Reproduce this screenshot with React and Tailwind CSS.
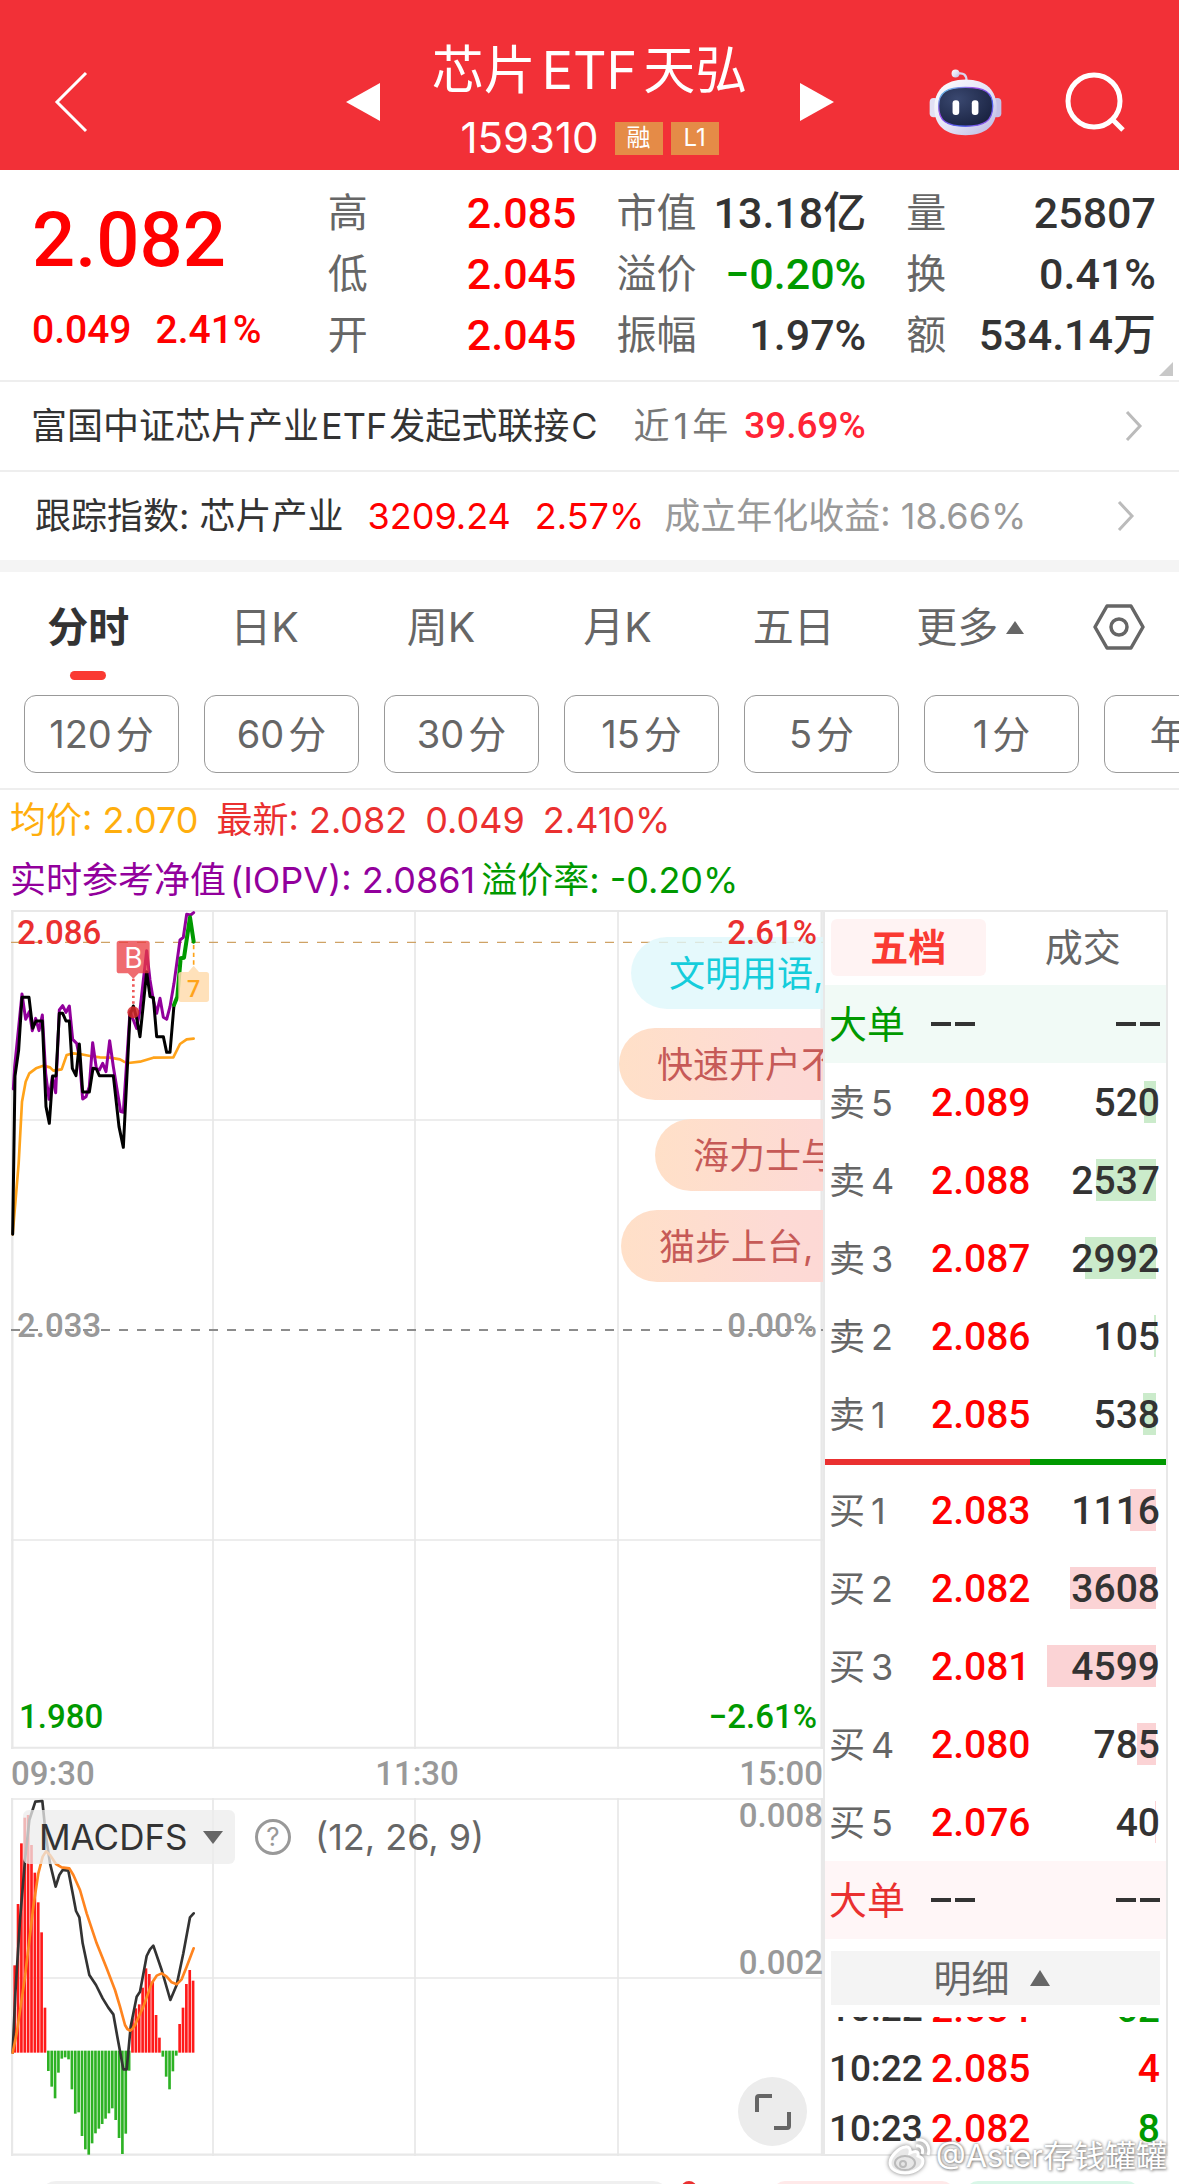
import { useState } from 'react'

const NUM = "font-['Roboto','Noto_Sans_CJK_SC',sans-serif] font-medium"

const STATS = [
  [
    { label: '高', value: '2.085', color: 'text-[#ff0000]' },
    { label: '低', value: '2.045', color: 'text-[#ff0000]' },
    { label: '开', value: '2.045', color: 'text-[#ff0000]' },
  ],
  [
    { label: '市值', value: '13.18亿', color: 'text-[#333]' },
    { label: '溢价', value: '−0.20%', color: 'text-[#009900]' },
    { label: '振幅', value: '1.97%', color: 'text-[#333]' },
  ],
  [
    { label: '量', value: '25807', color: 'text-[#333]' },
    { label: '换', value: '0.41%', color: 'text-[#333]' },
    { label: '额', value: '534.14万', color: 'text-[#333]' },
  ],
]

const TABS = ['分时', '日K', '周K', '月K', '五日', '更多']
const PERIODS = ['120分', '60分', '30分', '15分', '5分', '1分', '年K']

const SELLS = [
  ['卖5', '2.089', 520],
  ['卖4', '2.088', 2537],
  ['卖3', '2.087', 2992],
  ['卖2', '2.086', 105],
  ['卖1', '2.085', 538],
]
const BUYS = [
  ['买1', '2.083', 1116],
  ['买2', '2.082', 3608],
  ['买3', '2.081', 4599],
  ['买4', '2.080', 785],
  ['买5', '2.076', 40],
]
const MAX_VOL = 4599
const BAR_MAX = 109

const TICKS = [
  { time: '10:22', price: '2.084', vol: 62, color: 'text-[#009900]' },
  { time: '10:22', price: '2.085', vol: 4, color: 'text-[#ff0000]' },
  { time: '10:23', price: '2.082', vol: 8, color: 'text-[#009900]' },
]

/* ── Chart data (svg units, 3 per px) ── */
const IOPV = '40,567 44,500 66,282 77,358 88,335 97,392 107,355 117,392 127,345 137,520 147,598 157,530 167,578 178,330 188,317 198,337 208,318 218,418 230,430 238,470 248,597 258,590 268,560 278,428 289,505 298,510 308,490 318,515 329,422 340,500 362,635 370,637 390,335 400,360 410,385 420,330 440,152 450,240 460,300 470,340 480,295 490,352 500,358 510,320 522,250 540,120 550,112 560,43 572,45 581,38'
const PRICE = '38,1003 45,528 56,450 66,292 87,292 98,385 108,363 127,363 138,620 148,670 158,528 168,528 178,340 188,340 198,363 208,363 217,505 228,527 238,432 248,576 268,576 279,505 289,507 298,527 340,527 357,680 370,742 390,345 400,318 410,355 420,410 440,215 450,290 460,293 470,410 490,410 500,457 510,457 522,315'
const PRICE_TAIL = '522,315 532,290 542,175 552,173 570,52 581,125'
const AVG = '38,1003 56,790 66,605 77,545 88,520 108,505 130,497 150,502 160,512 185,508 200,465 220,460 240,462 270,468 300,472 330,473 360,478 372,485 385,489 420,485 440,479 460,473 520,472 540,432 560,418 581,416'
const DIF = '38,818 46,640 60,420 75,240 88,120 106,65 127,63 138,170 150,250 167,320 178,285 188,270 205,272 218,340 228,393 238,412 248,490 268,585 288,615 308,655 325,683 340,703 352,770 370,868 380,868 392,740 410,650 420,635 440,528 450,508 460,497 485,570 511,660 530,615 550,520 570,412 581,400'
const DEA = '38,818 50,760 75,590 100,380 115,280 128,230 138,214 150,225 168,252 185,262 208,265 220,285 240,330 260,400 290,490 320,565 345,630 360,680 375,735 382,747 390,752 397,747 405,735 430,680 455,610 470,587 485,580 500,590 515,607 530,613 545,598 560,560 581,505'
const MACD = [
  556, 372, 190, 113, 105, 195, 278, 367, 457, 683,
  873, 920, 955, 878, 836, 832, 838, 928, 1001, 997, 1068, 1108, 1124, 1090, 1060, 1046, 1032, 1016, 1000, 985, 1020, 1074, 1122, 1061, 872,
  715, 685, 673, 623, 565, 582, 605, 705, 773,
  830, 890, 928, 874, 827,
  732, 683, 612, 570, 602,
]

function Robot() {
  return (
    <svg viewBox="88 50 220 204" className="h-[68px] w-[73px]" aria-hidden="true">
      <defs>
        <linearGradient id="shell" x1="0" y1="0" x2="1" y2="1">
          <stop offset="0" stopColor="#ffffff" />
          <stop offset="0.55" stopColor="#e3e2f5" />
          <stop offset="1" stopColor="#b9b6e2" />
        </linearGradient>
        <linearGradient id="rim" x1="0" y1="0" x2="1" y2="1">
          <stop offset="0" stopColor="#4fe3e8" />
          <stop offset="0.35" stopColor="#a24be8" />
          <stop offset="0.7" stopColor="#4a62ee" />
          <stop offset="1" stopColor="#b04be8" />
        </linearGradient>
        <radialGradient id="visor" cx="0.35" cy="0.3" r="0.8">
          <stop offset="0" stopColor="#3a4870" />
          <stop offset="1" stopColor="#18213f" />
        </radialGradient>
      </defs>
      <path d="M176 66 Q201 62 201 88" fill="none" stroke="#d9d6ef" strokeWidth="7" />
      <circle cx="168" cy="66" r="12" fill="url(#shell)" />
      <rect x="90" y="140" width="26" height="58" rx="12" fill="#e2e0f4" />
      <rect x="280" y="140" width="26" height="58" rx="12" fill="#c4c1e8" />
      <path d="M198 84 C262 84 292 118 292 170 C292 224 258 252 198 252 C138 252 104 224 104 170 C104 118 134 84 198 84Z" fill="url(#shell)" />
      <path d="M198 108 C256 108 280 122 280 164 C280 210 254 225 198 225 C142 225 117 210 117 164 C117 122 142 108 198 108Z" fill="url(#visor)" stroke="url(#rim)" strokeWidth="4" />
      <rect x="159" y="147" width="20" height="44" rx="9" fill="#fff" />
      <rect x="217" y="147" width="20" height="44" rx="9" fill="#fff" />
    </svg>
  )
}

function Header() {
  return (
    <header className="grid shrink-0 grid-cols-[1fr_auto_1fr] items-center bg-[#f23037] pt-[39px] pb-[5px] text-white">
      <button aria-label="返回" className="ml-[53px] justify-self-start">
        <svg viewBox="0 0 36 62" className="h-[62px] w-9" fill="none" stroke="currentColor" strokeWidth="3">
          <path d="M33 2 L4 31 L33 60" />
        </svg>
      </button>
      <div className="flex items-center gap-5">
        <button aria-label="上一只">
          <svg viewBox="0 0 34 38" className="h-[38px] w-[34px]" fill="currentColor"><path d="M34 0 V38 L0 19Z" /></svg>
        </button>
        <div className="flex h-[126px] w-[380px] flex-col items-center">
          <h1 className="text-[52px] leading-[64px] whitespace-nowrap">芯片<span className="mx-1.5">ETF</span>天弘</h1>
          <div className="mt-[17px] flex h-9 items-center gap-2">
            <span className="mr-2 text-[42px] leading-9">159310</span>
            <span className="flex h-[33px] w-12 items-center justify-center bg-[#e58b47] text-2xl">融</span>
            <span className="flex h-[33px] w-12 items-center justify-center bg-[#e58b47] text-2xl">L1</span>
          </div>
        </div>
        <button aria-label="下一只">
          <svg viewBox="0 0 34 38" className="h-[38px] w-[34px]" fill="currentColor"><path d="M0 0 V38 L34 19Z" /></svg>
        </button>
      </div>
      <div className="mr-[53px] flex items-center gap-[60px] justify-self-end">
        <button aria-label="智能助手"><Robot /></button>
        <button aria-label="搜索">
          <svg viewBox="0 0 64 64" className="size-16" fill="none" stroke="currentColor" strokeWidth="5">
            <circle cx="32" cy="31" r="26" />
            <path d="M51 50 L61 60" />
          </svg>
        </button>
      </div>
    </header>
  )
}

function Quote() {
  return (
    <section className="relative grid shrink-0 grid-cols-[255fr_248fr_249fr_249fr] gap-x-10 border-b-2 border-[#eee] pt-3 pr-[23px] pb-[15px] pl-8">
      <div className={`text-[#ff0000] ${NUM}`}>
        <div className="mt-2 text-[76px] leading-[100px]">2.082</div>
        <div className="mt-5 flex gap-6 text-[39px] leading-10">
          <span>0.049</span>
          <span>2.41%</span>
        </div>
      </div>
      {STATS.map((col, i) => (
        <dl key={i}>
          {col.map(s => (
            <div key={s.label} className="flex h-[61px] items-center justify-between whitespace-nowrap">
              <dt className="text-[40px] leading-[60px] text-[#666]">{s.label}</dt>
              <dd className={`text-[43px] leading-[60px] ${NUM} ${s.color}`}>{s.value}</dd>
            </div>
          ))}
        </dl>
      ))}
      <svg viewBox="0 0 14 14" className="absolute right-1.5 bottom-1 size-3.5"><path d="M14 0 V14 H0Z" fill="#c8c8c8" /></svg>
    </section>
  )
}

function Chevron() {
  return (
    <svg viewBox="0 0 18 32" className="ml-auto h-8 w-[18px]" fill="none" stroke="#bbb" strokeWidth="3">
      <path d="M2 2 L15 16 L2 30" />
    </svg>
  )
}

function Links() {
  return (
    <>
      <a href="#fund" className="flex h-[90px] shrink-0 items-center border-b-2 border-[#eee] pr-9 pl-[31px] text-4xl whitespace-nowrap">
        <span className="text-[#333]">富国中证芯片产业<span className="mx-0.5">ETF</span>发起式联接<span className="ml-0.5">C</span></span>
        <span className="ml-9 text-[#777]">近<span className="mx-1">1</span>年</span>
        <span className={`ml-4 text-[37px] text-[#ff2436] ${NUM}`}>39.69%</span>
        <Chevron />
      </a>
      <a href="#index" className="flex h-[100px] shrink-0 items-center border-b-12 border-[#f4f4f4] pr-11 pl-[35px] text-4xl whitespace-nowrap">
        <span className="text-[#333]">跟踪指数: 芯片产业</span>
        <span className="ml-6 text-[#ff0000]">3209.24</span>
        <span className="ml-6 text-[#ff0000]">2.57%</span>
        <span className="ml-5 text-[#999]">成立年化收益: 18.66%</span>
        <Chevron />
      </a>
    </>
  )
}

function Tabs({ tab, setTab }) {
  return (
    <nav className="shrink-0 border-b-2 border-[#eee]">
      <div className="flex h-[108px]">
        {TABS.map(t => (
          <button
            key={t}
            onClick={() => setTab(t)}
            className={`flex flex-[177] flex-col items-center pt-[25px] text-[41px] leading-[60px] ${t === tab ? 'font-bold text-[#333]' : 'text-[#666]'}`}
          >
            <span className="flex items-center gap-2">
              {t}
              {t === '更多' && <svg viewBox="0 0 18 13" className="h-[13px] w-[18px]" fill="#666"><path d="M9 0 L18 13 H0Z" /></svg>}
            </span>
            {t === tab && <span className="mt-3.5 h-[9px] w-9 rounded-full bg-[#fa3a32]" />}
          </button>
        ))}
        <button aria-label="设置" className="flex flex-[121] justify-center pt-8">
          <svg viewBox="0 0 52 46" className="h-[46px] w-[52px]" fill="none" stroke="#666" strokeWidth="3.5" strokeLinejoin="round">
            <path d="M14 2 H38 L50 23 L38 44 H14 L2 23Z" />
            <circle cx="26" cy="23" r="8" />
          </svg>
        </button>
      </div>
      <div className="flex gap-[25px] overflow-hidden pt-[15px] pb-[15px] pl-6">
        {PERIODS.map(p => (
          <button key={p} className="h-[78px] w-[155px] shrink-0 rounded-xl border border-[#999] text-[38px] text-[#666]">
            {p.replace('分', '')}{p.includes('分') && <span className="ml-1">分</span>}
          </button>
        ))}
      </div>
    </nav>
  )
}

function PriceChart() {
  return (
    <div className="relative overflow-hidden">
      <svg viewBox="33 30 2436 2517" className="block w-full" fill="none">
        <g stroke="#e8e8e8" strokeWidth="6">
          <path d="M33 33 H2469 M33 2543 H2469" />
          <path d="M37 30 V2547 M2465 30 V2547" strokeWidth="7" />
          <path d="M639 30 V2547 M1245 30 V2547 M1854 30 V2547 M33 660 H2469 M33 1920 H2469" strokeWidth="5" />
        </g>
        <path d="M33 127 H2469" stroke="#cfa265" strokeWidth="4" strokeDasharray="27 27" />
        <path d="M33 1290 H2469" stroke="#8c8c8c" strokeWidth="6" strokeDasharray="27 27" />
      </svg>

      {/* live comment bubbles */}
      <div className="absolute inset-y-0 right-0 w-[204px] overflow-hidden text-4xl whitespace-nowrap">
        <div className="mt-[27px] ml-3 h-[72px] w-80 rounded-full bg-[#dff8fb]/80 pl-[38px] leading-[74px] text-[#15cddb]">文明用语,</div>
        <div className="mt-[19px] h-[72px] w-80 rounded-full bg-linear-to-r from-[#ffe0c8] via-[#fddad5] to-[#fdd5d5] pl-[38px] leading-[74px] text-[#c65a57]">快速开户不</div>
        <div className="mt-[19px] ml-9 h-[72px] w-80 rounded-full bg-linear-to-r from-[#ffe0c8] via-[#fddad5] to-[#fdd5d5] pl-[38px] leading-[74px] text-[#c65a57]">海力士与</div>
        <div className="mt-[19px] ml-0.5 h-[72px] w-80 rounded-full bg-linear-to-r from-[#ffe0c8] via-[#fddad5] to-[#fdd5d5] pl-[38px] leading-[74px] text-[#c65a57]">猫步上台,</div>
      </div>

      <div className={`absolute inset-0 text-[33px] leading-10 ${NUM}`}>
        <span className="absolute top-[3px] left-1.5 text-[#ea3030]">2.086</span>
        <span className="absolute top-[3px] right-1.5 text-[#ea3030]">2.61%</span>
        <span className="absolute bottom-1/2 left-1.5 -mb-4 text-[#999]">2.033</span>
        <span className="absolute right-1.5 bottom-1/2 -mb-4 text-[#999]">0.00%</span>
        <span className="absolute bottom-3 left-2 text-[#009900]">1.980</span>
        <span className="absolute right-1.5 bottom-3 text-[#009900]">−2.61%</span>
      </div>

      <svg viewBox="33 30 2436 2517" className="absolute inset-0 w-full" fill="none" strokeLinejoin="round" strokeLinecap="round">
        <polyline points={AVG} stroke="#ffa31a" strokeWidth="8" />
        <polyline points={IOPV} stroke="#92009c" strokeWidth="9" />
        <polyline points={PRICE} stroke="#000" strokeWidth="9" />
        <polyline points={PRICE_TAIL} stroke="#009900" strokeWidth="12" />
        {/* buy marker */}
        <path d="M400 236 V322" stroke="#ea3030" strokeOpacity="0.8" strokeWidth="8" strokeDasharray="7 10" strokeLinecap="butt" />
        <circle cx="400" cy="337" r="18" fill="#d62a2a" fillOpacity="0.85" />
        <path d="M358 122 H441 Q449 122 449 130 V212 Q449 220 441 220 H416 L400 236 L384 220 H358 Q350 220 350 212 V130 Q350 122 358 122Z" fill="#ea3a3f" fillOpacity="0.75" />
        <text x="400" y="204" textAnchor="middle" fontSize="84" fill="#fff" fontFamily="Inter, sans-serif">B</text>
        {/* signal count */}
        <path d="M581 135 V196" stroke="#ffa31a" strokeWidth="5" strokeDasharray="13 10" strokeLinecap="butt" />
        <path d="M543 216 H565 L581 197 L597 216 H619 Q627 216 627 224 V298 Q627 306 619 306 H543 Q535 306 535 298 V224 Q535 216 543 216Z" fill="#ffdcae" fillOpacity="0.85" />
        <text x="581" y="290" textAnchor="middle" fontSize="70" fontWeight="500" fill="#ffa31a" fontFamily="Roboto, sans-serif">7</text>
      </svg>
    </div>
  )
}

function MacdChart() {
  return (
    <div className="relative overflow-hidden">
      <svg viewBox="33 54 2436 1074" className="block w-full" fill="none" strokeLinejoin="round" strokeLinecap="round">
        <g stroke="#e8e8e8" strokeWidth="5">
          <path d="M33 57 H2469 M33 594 H2469 M639 54 V1128 M1245 54 V1128 M1854 54 V1128" />
          <path d="M36 54 V1128 M2466 54 V1128 M33 1124 H2469" strokeWidth="7" />
        </g>
        {MACD.map((v, i) => {
          const up = v < 815
          return <path key={i} d={`M${44 + i * 10.1} ${up ? 818 : 812} V${v}`} stroke={up ? '#ff1a1a' : '#2db224'} strokeWidth="8" strokeLinecap="butt" />
        })}
        <polyline points={DIF} stroke="#333" strokeWidth="8" />
        <polyline points={DEA} stroke="#ff841f" strokeWidth="8" />
      </svg>
      <div className="absolute top-3 left-3 flex items-center text-4xl">
        <div className="relative">
          <select aria-label="指标" className="h-[54px] w-[212px] appearance-none rounded-md bg-[#ececec]/75 pl-4 text-[35px] text-[#333]">
            <option>MACDFS</option>
          </select>
          <svg viewBox="0 0 20 13" className="pointer-events-none absolute top-[21px] right-3 h-[13px] w-5" fill="#666"><path d="M0 0 H20 L10 13Z" /></svg>
        </div>
        <button aria-label="指标说明" className="ml-5 flex size-9 items-center justify-center rounded-full border-3 border-[#999] text-[26px] leading-none text-[#999]">?</button>
        <span className="ml-6 text-[#666]">(12, 26, 9)</span>
      </div>
      <div className={`text-[33px] leading-9 text-[#999] ${NUM}`}>
        <span className="absolute top-0 right-0">0.008</span>
        <span className="absolute right-0 bottom-1/2 -mb-1">0.002</span>
      </div>
      <button aria-label="全屏" className="absolute right-4 bottom-2.5 flex size-[69px] items-center justify-center rounded-full bg-[#ececec]">
        <svg viewBox="0 0 36 36" className="size-9" fill="none" stroke="#666" strokeWidth="4">
          <path d="M2 18 V4 Q2 2 4 2 H17 M34 18 V32 Q34 34 32 34 H19" />
        </svg>
      </button>
    </div>
  )
}

function BigOrder({ row, label }) {
  return (
    <tr className={`h-[78px] ${row}`}>
      <th className={`w-[106px] pl-1 text-left text-[38px] font-normal ${label}`}>大单</th>
      <td className={NUM}><Dash /></td>
      <td className={`pr-1.5 ${NUM}`}><span className="flex justify-end"><Dash /></span></td>
    </tr>
  )
}

function Dash() {
  return (
    <span className="flex gap-1" role="img" aria-label="--">
      <span className="h-1 w-5 bg-[#333]" />
      <span className="h-1 w-5 bg-[#333]" />
    </span>
  )
}

function Level({ level, bar }) {
  const [label, price, vol] = level
  return (
    <tr className="h-[78px]">
      <th className="w-[106px] pt-0.5 pl-1 text-left text-4xl font-normal text-[#666]">{label[0]}<span className="ml-1.5">{label[1]}</span></th>
      <td className={`pt-0.5 text-[39px] text-[#ff0000] ${NUM}`}>{price}</td>
      <td className={`relative pt-0.5 pr-1.5 text-right text-[39px] text-[#333] ${NUM}`}>
        <span className={`absolute top-[18px] right-2.5 h-[42px] ${bar}`} style={{ width: Math.max(1, Math.round(vol / MAX_VOL * BAR_MAX)) }} />
        <span className="relative">{vol}</span>
      </td>
    </tr>
  )
}

function OrderBook() {
  return (
    <aside className="flex w-[345px] shrink-0 flex-col overflow-hidden border-2 border-[#e8e8e8]">
      <div className="mt-[7px] mb-[9px] flex h-[57px] shrink-0 px-1.5 text-[38px]">
        <button className="flex-1 rounded-md bg-[#fff3f3] font-bold text-[#fa3a32]">五档</button>
        <button className="ml-5 flex-1 text-[#666]">成交</button>
      </div>
      <table className="w-full table-fixed">
        <tbody>
          <BigOrder row="bg-[#f1faf6]" label="text-[#009900]" />
          {SELLS.map(l => <Level key={l[0]} level={l} bar="bg-[#cbebcb]" />)}
        </tbody>
      </table>
      <div className="my-1.5 flex h-1.5 shrink-0">
        <div className="w-3/5 bg-[#ea3030]" />
        <div className="flex-1 bg-[#009900]" />
      </div>
      <table className="w-full table-fixed">
        <tbody>
          {BUYS.map(l => <Level key={l[0]} level={l} bar="bg-[#fbd3d5]" />)}
          <BigOrder row="bg-[#fff6f7]" label="text-[#ea3030]" />
        </tbody>
      </table>
      <button className="mx-1.5 my-3 flex h-[54px] shrink-0 items-center justify-center gap-5 bg-[#f4f4f4] pr-2 text-[38px] text-[#666]">
        明细
        <svg viewBox="0 0 20 16" className="h-4 w-5" fill="#666"><path d="M10 0 L20 16 H0Z" /></svg>
      </button>
      <div className="h-[137px] overflow-hidden">
        <table className={`-mt-[38px] w-full table-fixed text-[39px] ${NUM}`}>
          <tbody>
            {TICKS.map((t, i) => (
              <tr key={i} className="h-[60px] leading-[60px]">
                <td className="w-[106px] pl-1 text-[37px] whitespace-nowrap text-[#333]">{t.time}</td>
                <td className="text-[#ff0000]">{t.price}</td>
                <td className={`pr-1.5 text-right ${t.color}`}>{t.vol}</td>
              </tr>
            ))}
          </tbody>
        </table>
      </div>
    </aside>
  )
}

function Watermark() {
  return (
    <div className="absolute right-3 bottom-1.5 flex items-center gap-1 text-[31px] leading-[44px] text-white [text-shadow:0_0_3px_#777,1px_1px_3px_#999]">
      <svg viewBox="0 0 44 38" className="h-[38px] w-11 drop-shadow-[0_0_2px_#777]" fill="none" stroke="#fff" strokeWidth="3">
        <path d="M17 10 C10 11 2 20 2 26 C2 32 9 36 17 36 C27 36 35 30 35 24 C35 21 33 20 30 19 C31 15 29 13 22 16 C23 12 21 9 17 10Z" fill="#fff" fillOpacity="0.8" />
        <ellipse cx="17" cy="26" rx="10" ry="7" stroke="#bbb" strokeWidth="2" />
        <circle cx="15" cy="27" r="3" stroke="#bbb" strokeWidth="2" />
        <path d="M28 9 C33 8 36 12 34 17 M28 3 C37 1 43 9 40 18" />
      </svg>
      <span>@Aster存钱罐罐</span>
    </div>
  )
}

export default function App() {
  const [tab, setTab] = useState('分时')

  return (
    <div className="relative flex h-screen flex-col overflow-hidden bg-white font-['Inter','Noto_Sans_CJK_SC',sans-serif]">
      <Header />
      <Quote />
      <Links />
      <Tabs tab={tab} setTab={setTab} />

      <div className="shrink-0 pl-2.5 text-4xl whitespace-nowrap">
        <div className="flex gap-[18px] leading-[60px] text-[#ea3030]">
          <span className="text-[#ffae0d]">均价: 2.070</span>
          <span>最新: 2.082</span>
          <span>0.049</span>
          <span>2.410%</span>
        </div>
        <div className="flex gap-1.5 leading-[60px]">
          <span className="text-[#92009c]">实时参考净值<span className="ml-1">(IOPV): 2.0861</span></span>
          <span className="text-[#009900]">溢价率: -0.20%</span>
        </div>
      </div>

      <main className="flex shrink-0 px-[11px]">
        <div className="min-w-0 flex-1">
          <PriceChart />
          <div className={`flex h-[49px] items-center justify-between text-[33px] text-[#999] ${NUM}`}>
            <span>09:30</span>
            <span>11:30</span>
            <span>15:00</span>
          </div>
          <MacdChart />
        </div>
        <OrderBook />
      </main>

      {/* bottom bar, mostly below the fold */}
      <footer className="mt-[25px] flex shrink-0 gap-3 pr-10 pl-10">
        <div className="h-20 flex-[630] rounded-2xl bg-[#f0f0f0]" />
        <div className="mr-16 size-4 rounded-full bg-[#ea3030]" />
        <div className="h-20 flex-[182] rounded-xl bg-[#ffe9e9]" />
        <div className="h-20 flex-[173] rounded-xl bg-[#d9f7e8]" />
      </footer>

      <Watermark />
    </div>
  )
}
